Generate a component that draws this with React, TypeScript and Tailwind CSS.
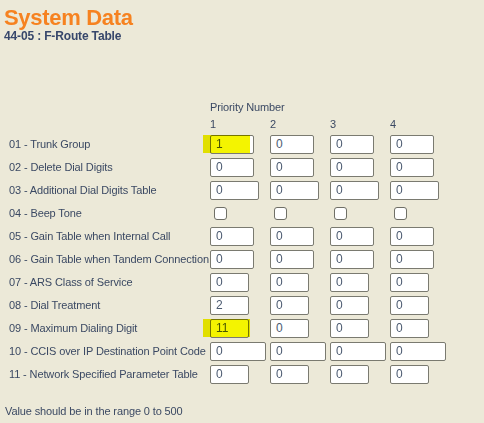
import React from "react";

type Row = { label: string; kind: "text" | "check"; w?: number; values?: string[] };

const rows: Row[] = [
  { label: "01 - Trunk Group", kind: "text", w: 44, values: ["1", "0", "0", "0"] },
  { label: "02 - Delete Dial Digits", kind: "text", w: 44, values: ["0", "0", "0", "0"] },
  { label: "03 - Additional Dial Digits Table", kind: "text", w: 49, values: ["0", "0", "0", "0"] },
  { label: "04 - Beep Tone", kind: "check" },
  { label: "05 - Gain Table when Internal Call", kind: "text", w: 44, values: ["0", "0", "0", "0"] },
  { label: "06 - Gain Table when Tandem Connection", kind: "text", w: 44, values: ["0", "0", "0", "0"] },
  { label: "07 - ARS Class of Service", kind: "text", w: 39, values: ["0", "0", "0", "0"] },
  { label: "08 - Dial Treatment", kind: "text", w: 39, values: ["2", "0", "0", "0"] },
  { label: "09 - Maximum Dialing Digit", kind: "text", w: 39, values: ["11", "0", "0", "0"] },
  { label: "10 - CCIS over IP Destination Point Code", kind: "text", w: 56, values: ["0", "0", "0", "0"] },
  { label: "11 - Network Specified Parameter Table", kind: "text", w: 39, values: ["0", "0", "0", "0"] },
];

const widthClass: Record<number, string> = {
  39: "w-[39px]",
  44: "w-[44px]",
  49: "w-[49px]",
  56: "w-[56px]",
};

function Field({ value, w, highlight }: { value: string; w: number; highlight?: boolean }) {
  return (
    <div className="relative">
      <div
        className={`${widthClass[w]} h-[19px] rounded-[2px] border border-[#7a7a70] bg-white pl-[5px] text-[12px] leading-[17px] text-[#4b5a70]`}
      >
        {value}
      </div>
      {highlight && (
        <div className="pointer-events-none absolute left-[-7px] top-[0px] h-[18px] w-[47px] bg-[#f4f400] mix-blend-multiply" />
      )}
    </div>
  );
}

function Check() {
  return <div className="ml-[4px] h-[13px] w-[13px] rounded-[3px] border border-[#6f6f66] bg-white" />;
}

export default function App() {
  return (
    <div
      className="min-h-[423px] w-[484px] bg-[#ece9d8] pl-[4px]"
      style={{ fontFamily: '"Liberation Sans", Arial, sans-serif' }}
    >
      <div className="pt-[6px] text-[22px] font-bold leading-[23px] tracking-[-0.3px] text-[#f68220]">
        System Data
      </div>
      <div className="text-[12px] font-bold leading-[14px] tracking-[-0.15px] text-[#37476b]">
        44-05 : F-Route Table
      </div>

      <div className="mt-[56px] pl-[5px] text-[11px] tracking-[-0.12px] text-[#3b4963]">
        <div className="grid grid-cols-[201px_60px_60px_60px_60px]">
          <div className="h-[17px]" />
          <div className="col-span-4 h-[17px] leading-[17px]">Priority Number</div>
          <div className="h-[17px]" />
          <div className="h-[17px] leading-[17px]">1</div>
          <div className="h-[17px] leading-[17px]">2</div>
          <div className="h-[17px] leading-[17px]">3</div>
          <div className="h-[17px] leading-[17px]">4</div>
          {rows.map((r, i) => (
            <React.Fragment key={i}>
              <div className="flex h-[23px] items-center whitespace-nowrap">{r.label}</div>
              {r.kind === "check"
                ? [0, 1, 2, 3].map((c) => (
                    <div key={c} className="flex h-[23px] items-center">
                      <Check />
                    </div>
                  ))
                : r.values!.map((v, c) => (
                    <div key={c} className="flex h-[23px] items-center">
                      <Field value={v} w={r.w!} highlight={c === 0 && (i === 0 || i === 8)} />
                    </div>
                  ))}
            </React.Fragment>
          ))}
        </div>
      </div>

      <div className="mt-[17px] pl-[1px] text-[11px] tracking-[-0.12px] text-[#3b4963]">
        Value should be in the range 0 to 500
      </div>
    </div>
  );
}
